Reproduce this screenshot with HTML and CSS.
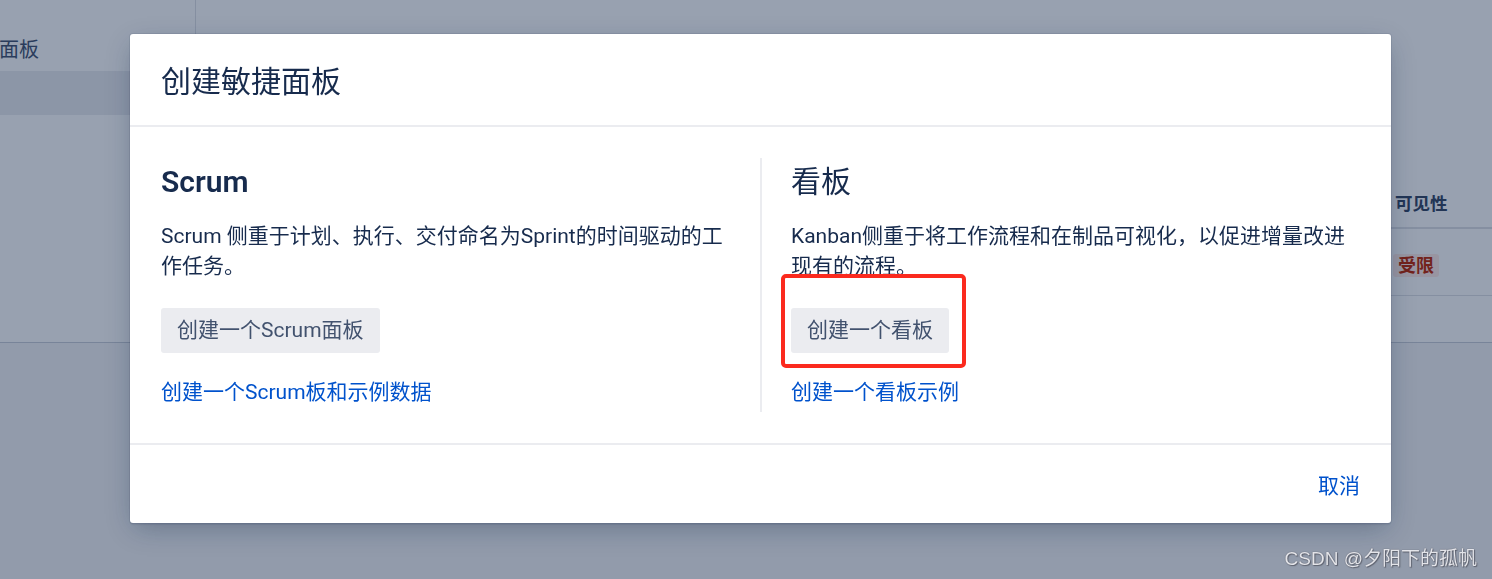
FILE: index.html
```html
<!DOCTYPE html>
<html lang="zh-CN">
<head>
<meta charset="utf-8">
<title>创建敏捷面板</title>
<link rel="stylesheet" href="styles.css">
</head>
<body>
<div class="page">
  <div class="page-top">
    <aside class="sidebar">
      <div class="nav-item">面板</div>
      <div class="nav-item selected"></div>
    </aside>
    <main class="content">
      <div class="table">
        <div class="row head">
          <div class="cell spacer"></div>
          <div class="cell vis">可见性</div>
        </div>
        <div class="row body-row">
          <div class="cell spacer"></div>
          <div class="cell vis"><span class="lozenge">受限</span></div>
        </div>
      </div>
    </main>
  </div>
  <div class="page-bottom"></div>
</div>

<div class="blanket">
  <section class="modal">
    <header class="modal-header">
      <h1 class="modal-title">创建敏捷面板</h1>
    </header>
    <div class="modal-body">
      <div class="col col-left">
        <h2 class="col-title latin">Scrum</h2>
        <p class="col-desc">Scrum 侧重于计划、执行、交付命名为Sprint的时间驱动的工作任务。</p>
        <button class="btn">创建一个Scrum面板</button>
        <a class="link" href="#">创建一个Scrum板和示例数据</a>
      </div>
      <div class="col col-right">
        <h2 class="col-title">看板</h2>
        <p class="col-desc">Kanban侧重于将工作流程和在制品可视化，以促进增量改进现有的流程。</p>
        <button class="btn">创建一个看板</button>
        <a class="link" href="#">创建一个看板示例</a>
        <div class="annotation"></div>
      </div>
    </div>
    <footer class="modal-footer">
      <a class="link cancel" href="#">取消</a>
    </footer>
  </section>
</div>

<div class="watermark">CSDN @夕阳下的孤帆</div>
</body>
</html>
```
FILE: styles.css
```css
* { box-sizing: border-box; }

html, body {
  margin: 0;
  padding: 0;
  height: 100%;
  overflow: hidden;
}

body {
  font-family: Roboto, "Noto Sans CJK SC", sans-serif;
  color: #172b4d;
  background: #f4f5f7;
}

/* ---------- underlying page ---------- */
.page {
  display: flex;
  flex-direction: column;
  height: 100%;
}

.page-top {
  display: flex;
  height: 343px;
  background: #ffffff;
  border-bottom: 1px solid #c9ced7;
}

.sidebar {
  width: 196px;
  border-right: 1px solid #dfe1e6;
  padding-top: 30px;
  display: flex;
  flex-direction: column;
}

.nav-item {
  height: 41px;
  line-height: 41px;
  font-size: 20px;
  color: #42526e;
  margin-left: -1px;
}

.nav-item.selected {
  height: 44px;
  background: #ebecf0;
  margin-left: 0;
}

.content {
  flex: 1;
  padding-top: 180px;
}

.table {
  display: flex;
  flex-direction: column;
}

.row {
  display: flex;
}

.row.head {
  height: 49px;
  border-bottom: 2px solid #dfe1e6;
  align-items: center;
  padding-bottom: 2px;
}

.row.body-row {
  height: 67px;
  border-bottom: 1px solid #dfe1e6;
  align-items: center;
  padding-top: 6px;
}

.cell.spacer { flex: 1; }

.cell.vis {
  width: 97px;
  flex: none;
  font-size: 17.5px;
  font-weight: 700;
  color: #344563;
}

.lozenge {
  display: inline-block;
  margin-left: -2px;
  padding: 0 5px;
  height: 23px;
  line-height: 23px;
  font-size: 18px;
  font-weight: 700;
  color: #bf2600;
  background: #ffebe6;
  border-radius: 3px;
}

/* ---------- blanket + modal ---------- */
.blanket {
  position: fixed;
  inset: 0;
  background: rgba(9, 30, 66, 0.42);
  padding-top: 34px;
  padding-left: 130px;
}

.modal {
  width: 1261px;
  background: #ffffff;
  border-radius: 3px;
  box-shadow: 0 0 0 1px rgba(9, 30, 66, 0.08),
              0 2px 1px rgba(9, 30, 66, 0.08),
              0 8px 26px -4px rgba(9, 30, 66, 0.32);
  display: flex;
  flex-direction: column;
}

.modal-header {
  height: 93px;
  padding: 28px 31px 0;
  border-bottom: 2px solid #ebecf0;
}

.modal-title {
  margin: 0;
  font-size: 30px;
  line-height: 40px;
  font-weight: 400;
  color: #172b4d;
}

.modal-body {
  display: flex;
  padding: 31px 30px 31px 31px;
  border-bottom: 2px solid #ebecf0;
}

.col {
  display: flex;
  flex-direction: column;
  align-items: flex-start;
}

.col-left {
  width: 599px;
  padding-right: 29px;
}

.col-right {
  position: relative;
  width: 601px;
  border-left: 2px solid #ebecf0;
  padding-left: 29px;
}

.col-title {
  margin: 0;
  font-size: 30px;
  line-height: 48px;
  font-weight: 400;
  color: #172b4d;
}

.col-title.latin {
  font-weight: 600;
  font-size: 30px;
}

.col-desc {
  margin: 15px 0 0;
  font-size: 21px;
  line-height: 30px;
  color: #172b4d;
}

.btn {
  margin-top: 27px;
  height: 45px;
  padding: 0 16px;
  border: none;
  border-radius: 3px;
  background: #ebecf0;
  color: #42526e;
  font-family: inherit;
  font-size: 21px;
  line-height: 45px;
  cursor: pointer;
}

.link {
  color: #0052cc;
  text-decoration: none;
  font-size: 21px;
}

.col .link {
  margin-top: 24px;
  margin-bottom: 5px;
  line-height: 30px;
}

.annotation {
  position: absolute;
  left: 19px;
  top: 116px;
  width: 185px;
  height: 94px;
  border: 4px solid #fb2a1e;
  border-radius: 5px;
}

.modal-footer {
  height: 78px;
  display: flex;
  justify-content: flex-end;
  align-items: flex-start;
  padding: 26px 31px 0 0;
}

.cancel {
  line-height: 30px;
}

/* ---------- watermark ---------- */
.watermark {
  position: fixed;
  right: 15px;
  bottom: 8px;
  font-family: "Liberation Sans", "Noto Sans CJK SC", sans-serif;
  font-size: 19px;
  line-height: 24px;
  color: #e4e5ea;
  text-shadow: 0 0 1px rgba(50, 50, 60, 0.8), 1px 1px 1px rgba(50, 50, 60, 0.5);
}
```
